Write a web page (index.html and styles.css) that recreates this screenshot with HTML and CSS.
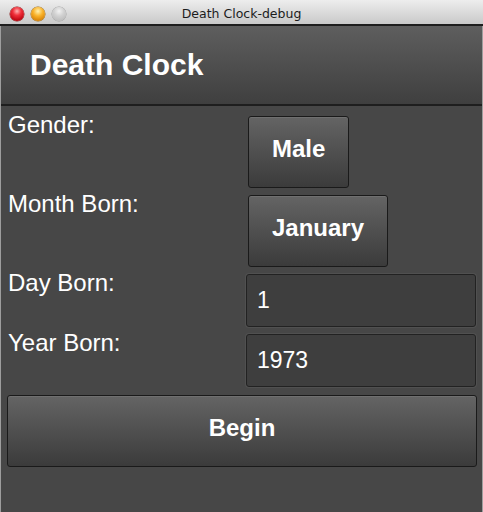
FILE: index.html
```html
<!DOCTYPE html>
<html>
<head>
<meta charset="utf-8">
<title>Death Clock-debug</title>
<link rel="stylesheet" href="styles.css">
</head>
<body>
<div class="window">
  <div class="titlebar">
    <div class="lights">
      <span class="light light-red"></span>
      <span class="light light-yellow"></span>
      <span class="light light-gray"></span>
    </div>
    <div class="title">Death Clock-debug</div>
    <div class="spacer"></div>
  </div>
  <header class="header">
    <h1 class="header-title">Death Clock</h1>
  </header>
  <main class="form">
    <span class="label">Gender:</span>
    <div class="cell"><button class="btn btn-pick">Male</button></div>
    <span class="label">Month Born:</span>
    <div class="cell"><button class="btn btn-pick">January</button></div>
    <span class="label">Day Born:</span>
    <div class="cell"><div class="field">1</div></div>
    <span class="label">Year Born:</span>
    <div class="cell"><div class="field">1973</div></div>
    <button class="btn btn-begin">Begin</button>
  </main>
</div>
</body>
</html>
```

FILE: styles.css
```css
* { box-sizing: border-box; }

html, body {
  margin: 0;
  padding: 0;
  height: 100%;
}

body {
  font-family: "Liberation Sans", Arial, sans-serif;
  background: #474747;
}

.window {
  height: 512px;
  display: flex;
  flex-direction: column;
  background: #474747;
  border-left: 1px solid #9e9e9e;
  border-right: 1px solid #9e9e9e;
}

.titlebar {
  height: 26px;
  flex: none;
  display: grid;
  grid-template-columns: 1fr auto 1fr;
  align-items: center;
  background: linear-gradient(#ededed, #c9c9c9);
  border-bottom: 2px solid #1e1e1e;
  margin: 0 -1px;
}

.lights {
  display: flex;
  gap: 7px;
  padding-left: 10px;
  padding-top: 4px;
}

.light {
  width: 14px;
  height: 14px;
  border-radius: 50%;
  display: block;
}

.light-red {
  background: radial-gradient(circle at 50% 30%, #ffb0b0 0, #f0303a 35%, #b8000c 80%, #8a0008 100%);
  box-shadow: 0 0 0 0.5px #8a1a1a;
}

.light-yellow {
  background: radial-gradient(circle at 50% 30%, #fff2b0 0, #f9b22a 40%, #d27a00 85%, #a85e00 100%);
  box-shadow: 0 0 0 0.5px #9a6a10;
}

.light-gray {
  background: radial-gradient(circle at 50% 30%, #f2f2f2 0, #d2d2d2 40%, #b2b2b2 100%);
  box-shadow: 0 0 0 0.5px #a0a0a0;
}

.title {
  font-family: "DejaVu Sans", sans-serif;
  font-size: 12.5px;
  color: #1c1c1c;
  padding-top: 2px;
}

.header {
  height: 80px;
  flex: none;
  display: flex;
  align-items: center;
  padding-left: 29px;
  background: linear-gradient(#5e5e5e, #3f3f3f);
  border-bottom: 2px solid #1e1e1e;
}

.header-title {
  margin: 0;
  font-size: 30px;
  font-weight: bold;
  color: #ffffff;
}

.form {
  display: grid;
  grid-template-columns: 239px 1fr;
  row-gap: 2px;
  padding: 5px 5px 0 6px;
}

.label {
  font-size: 24px;
  color: #ffffff;
  padding-left: 1px;
  align-self: start;
}

.cell {
  padding-top: 5px;
  padding-right: 1px;
  display: flex;
}

.btn {
  font-family: "Liberation Sans", Arial, sans-serif;
  font-size: 24px;
  font-weight: bold;
  color: #ffffff;
  height: 72px;
  padding: 0 0 7px 0;
  display: flex;
  align-items: center;
  justify-content: center;
  background: linear-gradient(#646464, #3b3b3b);
  border: 1px solid #1a1a1a;
  border-radius: 3px;
  box-shadow: inset 0 1px 0 rgba(255,255,255,0.08);
}

.btn-pick {
  margin-left: 2px;
  padding-left: 23px;
  padding-right: 23px;
}

.btn-begin {
  grid-column: 1 / 3;
  width: 100%;
  margin-top: 6px;
}

.field {
  flex: 1;
  height: 53px;
  display: flex;
  align-items: center;
  padding-left: 10px;
  font-size: 23px;
  color: #ffffff;
  background: #3e3e3e;
  border: 1px solid #222222;
  border-radius: 3px;
  box-shadow: 0 0 0 1px #505050;
}
```
